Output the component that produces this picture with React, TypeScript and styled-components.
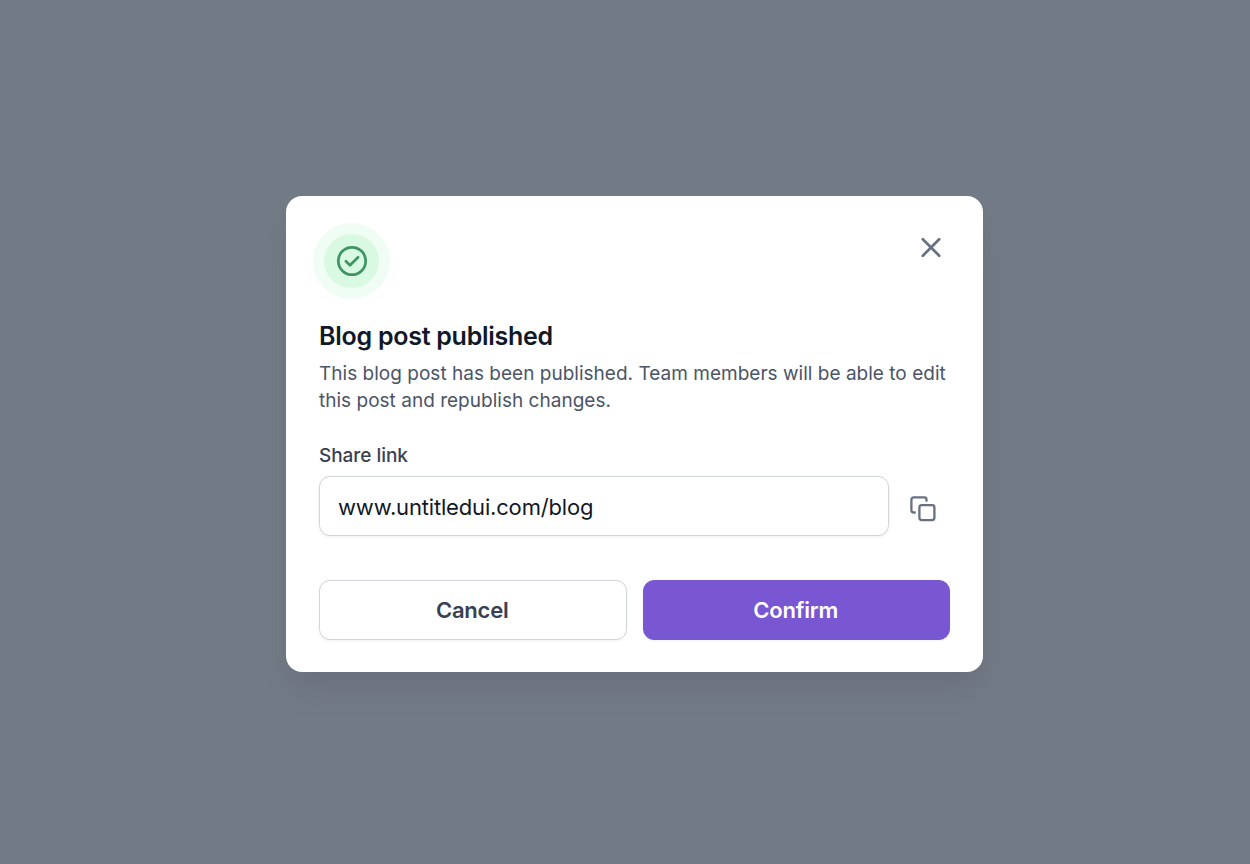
import React from "react";
import styled, { createGlobalStyle } from "styled-components";

const GlobalStyle = createGlobalStyle`
  * { box-sizing: border-box; }
  body { margin: 0; background: #727a85; font-family: Inter, sans-serif; }
`;

const Backdrop = styled.main`
  min-height: 864px;
  display: flex;
  flex-direction: column;
  align-items: flex-start;
  padding: 196px 0 0 286px;
`;

const Dialog = styled.section`
  width: 697px;
  height: 476px;
  padding: 27px 33px 32px;
  border-radius: 16px;
  background: #fff;
  box-shadow: 0 24px 28px -6px rgba(90, 88, 110, 0.16), 0 10px 14px -5px rgba(90, 88, 110, 0.12);
`;

const Header = styled.header`
  display: flex;
  justify-content: space-between;
  align-items: flex-start;
  height: 76px;
`;

const StatusBadge = styled.div`
  display: grid;
  place-items: center;
  width: 77px;
  height: 76px;
  margin-left: -6px;
  border: 11px solid #effdf4;
  border-radius: 50%;
  background: #d9f9e2;
`;

const IconButton = styled.button`
  display: grid;
  place-items: center;
  width: 54px;
  height: 54px;
  padding: 0;
  border: 0;
  background: transparent;
  color: #687083;
`;

const CloseButton = styled(IconButton)`
  margin: -2.5px -8px 0 0;
`;

const Title = styled.h1`
  margin: 18px 0 0;
  color: #111827;
  font-size: 25px;
  font-weight: 600;
  letter-spacing: -0.26px;
  line-height: 38px;
`;

const Description = styled.p`
  margin: 5px 0 0;
  color: #4b5566;
  font-size: 19px;
  letter-spacing: 0.018px;
  line-height: 27px;
  white-space: nowrap;
`;

const Label = styled.label`
  display: block;
  margin-top: 28px;
  color: #374151;
  font-size: 19px;
  font-weight: 500;
  letter-spacing: -0.04px;
  line-height: 27px;
`;

const LinkRow = styled.div`
  display: flex;
  align-items: center;
  margin-top: 7px;
`;

const LinkInput = styled.input`
  width: 570px;
  height: 60px;
  padding: 1px 18px 0;
  border: 1.4px solid #d2d5db;
  border-radius: 11px;
  background: #fff;
  box-shadow: 0 1px 3px rgba(16, 24, 40, 0.08);
  color: #111827;
  font: 400 22px/32px Inter, sans-serif;
  letter-spacing: -0.17px;
`;

const CopyButton = styled(IconButton)`
  margin: 5px 0 0 7px;
`;

const Actions = styled.footer`
  display: flex;
  gap: 16px;
  margin-top: 44px;
`;

const ActionButton = styled.button<{ $primary?: boolean }>`
  flex: 1;
  height: 60px;
  padding: 0 1px 0 0;
  border: 1px solid ${({ $primary }) => ($primary ? "#7956d2" : "#d2d5db")};
  border-radius: 11px;
  background: ${({ $primary }) => ($primary ? "#7956d2" : "#fff")};
  color: ${({ $primary }) => ($primary ? "#fff" : "#374151")};
  box-shadow: 0 1px 3px rgba(16, 24, 40, 0.06);
  font: 600 22px/32px Inter, sans-serif;
  letter-spacing: -0.2px;
`;

const CheckIcon = () => (
  <svg width="32" height="32" viewBox="0 0 32 32" fill="none" stroke="#3e9560" strokeWidth="2.7" strokeLinecap="round" strokeLinejoin="round">
    <circle cx="16" cy="16" r="13.7" />
    <path d="m9.9 16.2 4.1 4.1 8.1-8.1" />
  </svg>
);

const CloseIcon = () => (
  <svg width="32" height="32" viewBox="0 0 32 32" fill="none" stroke="currentColor" strokeWidth="2.7" strokeLinecap="round">
    <path d="m7.8 7.3 16.4 16.4M24.2 7.3 7.8 23.7" />
  </svg>
);

const CopyIcon = () => (
  <svg width="28" height="28" viewBox="0 0 28 28" fill="none" stroke="currentColor" strokeWidth="2.3" strokeLinecap="round" strokeLinejoin="round">
    <rect x="10.4" y="10.1" width="15" height="15" rx="2.3" />
    <path d="M5.8 17.5H4.7a2.3 2.3 0 0 1-2.3-2.3V4.7a2.3 2.3 0 0 1 2.3-2.3h10.5a2.3 2.3 0 0 1 2.3 2.3v1.1" />
  </svg>
);

export default function App() {
  return (
    <>
      <GlobalStyle />
      <Backdrop>
        <Dialog role="dialog" aria-labelledby="title">
          <Header>
            <StatusBadge><CheckIcon /></StatusBadge>
            <CloseButton aria-label="Close"><CloseIcon /></CloseButton>
          </Header>
          <Title id="title">Blog post published</Title>
          <Description>
            This blog post has been published. Team members will be able to edit<br />
            this post and republish changes.
          </Description>
          <Label htmlFor="share-link">Share link</Label>
          <LinkRow>
            <LinkInput id="share-link" defaultValue="www.untitledui.com/blog" />
            <CopyButton aria-label="Copy link"><CopyIcon /></CopyButton>
          </LinkRow>
          <Actions>
            <ActionButton>Cancel</ActionButton>
            <ActionButton $primary>Confirm</ActionButton>
          </Actions>
        </Dialog>
      </Backdrop>
    </>
  );
}
